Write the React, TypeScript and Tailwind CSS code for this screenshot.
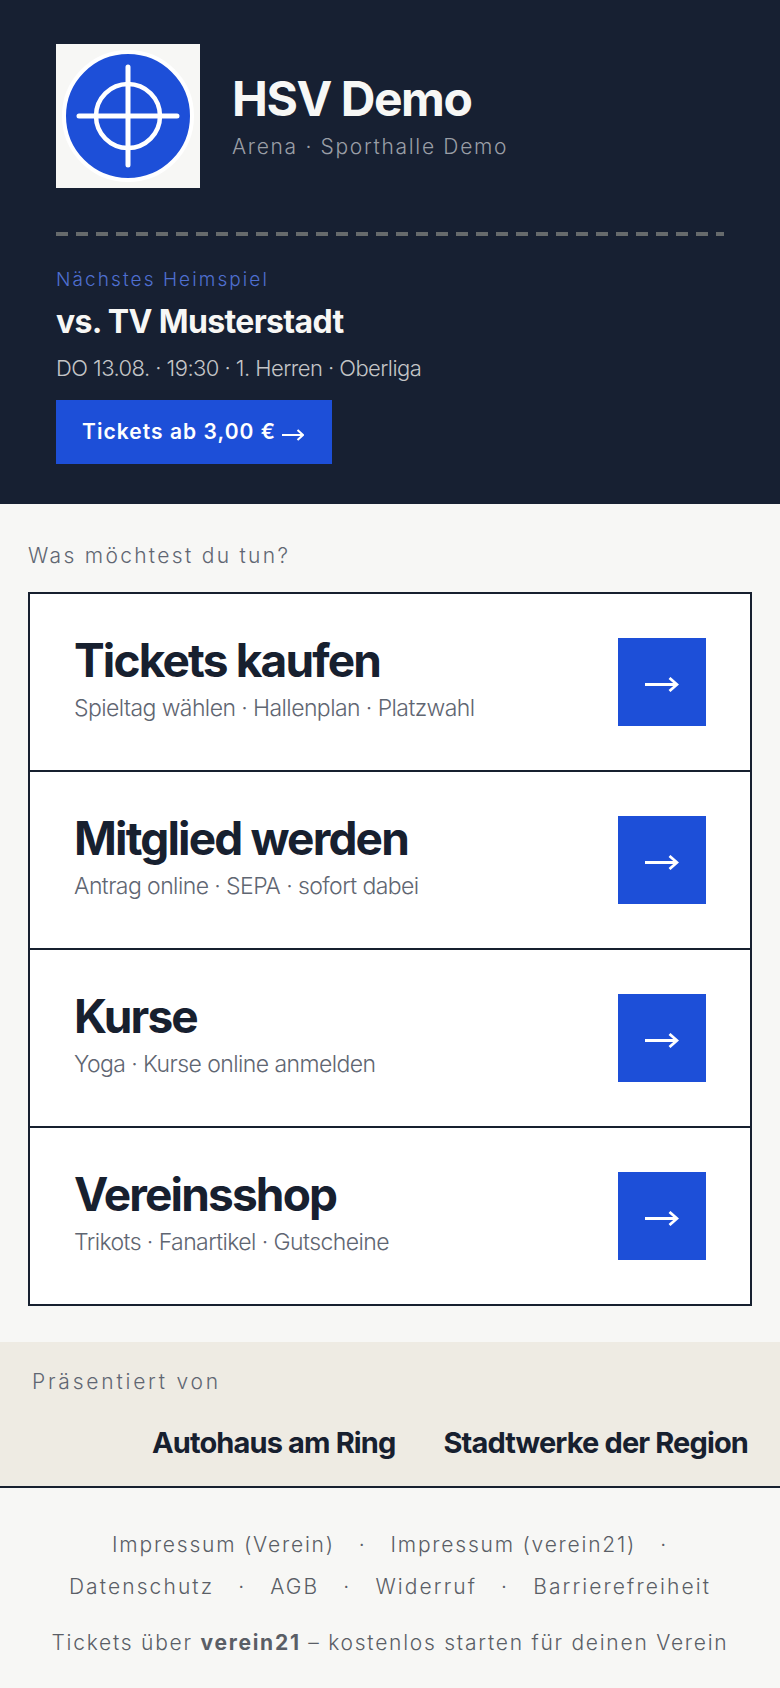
const actions = [
  { title: "Tickets kaufen", sub: "Spieltag wählen · Hallenplan · Platzwahl" },
  { title: "Mitglied werden", sub: "Antrag online · SEPA · sofort dabei" },
  { title: "Kurse", sub: "Yoga · Kurse online anmelden" },
  { title: "Vereinsshop", sub: "Trikots · Fanartikel · Gutscheine" },
];

const linkRows = [
  ["Impressum (Verein)", "Impressum (verein21)"],
  ["Datenschutz", "AGB", "Widerruf", "Barrierefreiheit"],
];

function Logo() {
  return (
    <div className="h-[144px] w-[144px] shrink-0 bg-[#f7f7f5]">
      <svg viewBox="0 0 144 144" className="h-full w-full">
        <circle cx="72" cy="72" r="64" fill="#1d4fd8" stroke="#fff" strokeWidth="4" />
        <circle cx="72" cy="72" r="32" fill="none" stroke="#fff" strokeWidth="4.5" />
        <path d="M72 23v98M23 72h98" stroke="#fff" strokeWidth="5" strokeLinecap="round" />
      </svg>
    </div>
  );
}

function RowArrow() {
  return (
    <svg width="34" height="15" viewBox="0 0 34 15" fill="none" stroke="#fff" strokeWidth="2.8" className="mt-[5px]">
      <path d="M0 7.5h32M24.5 1l7.5 6.5-7.5 6.5" />
    </svg>
  );
}

function ButtonArrow() {
  return (
    <svg width="22" height="12" viewBox="0 0 22 12" fill="none" stroke="#fff" strokeWidth="2" className="mt-[5px]">
      <path d="M0 6h20.5M15.5 1l5.5 5-5.5 5" />
    </svg>
  );
}

export default function App() {
  return (
    <div className="min-h-[1688px] bg-[#f7f7f5] font-['Inter',sans-serif] text-[#17202f]">
      <header className="bg-[#172032] px-[56px] pb-[40px] pt-[44px]">
        <div className="flex items-center gap-[32px]">
          <Logo />
          <div className="pb-[3px]">
            <h1 className="text-[48px] font-bold leading-[60px] tracking-[-0.03em] text-[#f7f7f5]">HSV Demo</h1>
            <p className="mt-[4px] text-[21px] font-light leading-[28px] tracking-[0.08em] text-[#9a9ea6]">Arena · Sporthalle Demo</p>
          </div>
        </div>
        <div className="mt-[44px] h-[4px] w-[668px] bg-[repeating-linear-gradient(90deg,#666a6c_0,#666a6c_12px,transparent_12px,transparent_20px)]" />
        <p className="mt-[31px] text-[19px] font-light leading-[26px] tracking-[0.11em] text-[#4f6fd0]">Nächstes Heimspiel</p>
        <h2 className="mt-[8px] text-[32px] font-bold leading-[42px] tracking-[-0.02em] text-[#f7f7f5]">vs. TV Musterstadt</h2>
        <p className="mt-[10px] text-[22px] font-light leading-[30px] tracking-[-0.025em] text-[#c4c5c7]">DO 13.08. · 19:30 · 1. Herren · Oberliga</p>
        <a className="mt-[17px] flex h-[64px] w-[276px] items-center gap-[6px] bg-[#1d4fd8] pl-[26px] text-[21px] font-semibold tracking-[0.05em] text-white">
          <span>Tickets ab 3,00 €</span>
          <ButtonArrow />
        </a>
      </header>

      <main className="px-[28px] pb-[36px] pt-[38px]">
        <p className="text-[21px] font-light leading-[28px] tracking-[0.11em] text-[#5f6672]">Was möchtest du tun?</p>
        <div className="mt-[22px] border-2 border-[#17202f] bg-white">
          {actions.map((a, i) => (
            <div key={a.title} className={`flex items-center justify-between px-[44px] py-[38px] ${i > 0 ? "border-t-2 border-[#17202f]" : ""}`}>
              <div className="pb-[9px]">
                <h3 className="text-[46px] font-bold leading-[56px] tracking-[-0.04em] text-[#17202f]">{a.title}</h3>
                <p className="mt-[5px] text-[23px] font-light leading-[30px] tracking-[-0.025em] text-[#5f6672]">{a.sub}</p>
              </div>
              <div className="flex h-[88px] w-[88px] items-center justify-center bg-[#1d4fd8]">
                <RowArrow />
              </div>
            </div>
          ))}
        </div>
      </main>

      <section className="border-b-2 border-[#17202f] bg-[#eeebe3] px-[32px] pb-[24px] pt-[26px]">
        <p className="text-[21px] font-light leading-[28px] tracking-[0.133em] text-[#5f6672]">Präsentiert von</p>
        <div className="mt-[28px] flex justify-end gap-[48px] text-[29px] font-bold leading-[38px] tracking-[-0.03em] text-[#17202f]">
          <span>Autohaus am Ring</span>
          <span>Stadtwerke der Region</span>
        </div>
      </section>

      <footer className="px-[28px] pt-[36px] text-center text-[21px] font-light text-[#5a5e66]">
        {linkRows.map((row, i) => (
          <div key={i} className={`flex h-[42px] items-center justify-center gap-[24px] ${i === 0 ? "tracking-[0.085em]" : "tracking-[0.1em]"}`}>
            {row.map((l, j) => (
              <span key={l} className="flex items-center gap-[24px]">
                {j > 0 && <span>·</span>}
                {l}
              </span>
            ))}
            {i === 0 && <span>·</span>}
          </div>
        ))}
        <p className="mt-[20px] leading-[30px] tracking-[0.083em]">
          Tickets über <b className="font-bold">verein21</b> – kostenlos starten für deinen Verein
        </p>
      </footer>
    </div>
  );
}
